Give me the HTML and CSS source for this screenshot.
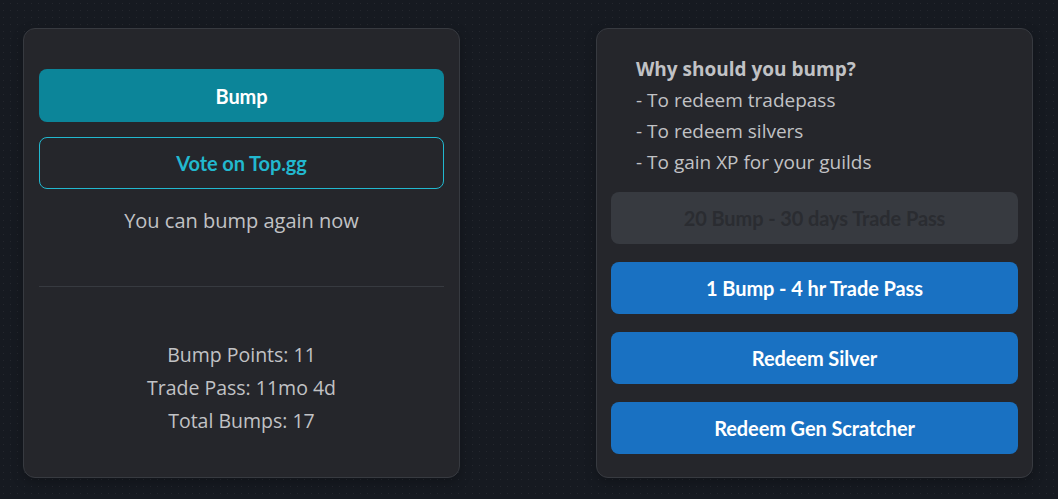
FILE: index.html
```html
<!DOCTYPE html>
<html lang="en">
<head>
<meta charset="utf-8">
<title>Bump</title>
<link rel="stylesheet" href="styles.css">
</head>
<body>
<main class="page">
  <section class="card card-left">
    <button class="btn btn-teal">Bump</button>
    <button class="btn btn-outline">Vote on Top.gg</button>
    <p class="status">You can bump again now</p>
    <hr class="divider">
    <div class="stats">
      <div>Bump Points: 11</div>
      <div>Trade Pass: 11mo 4d</div>
      <div>Total Bumps: 17</div>
    </div>
  </section>
  <section class="card card-right">
    <div class="why">
      <div class="why-title">Why should you bump?</div>
      <div>- To redeem tradepass</div>
      <div>- To redeem silvers</div>
      <div>- To gain XP for your guilds</div>
    </div>
    <div class="actions">
      <button class="btn btn-disabled" disabled>20 Bump - 30 days Trade Pass</button>
      <button class="btn btn-blue">1 Bump - 4 hr Trade Pass</button>
      <button class="btn btn-blue">Redeem Silver</button>
      <button class="btn btn-blue">Redeem Gen Scratcher</button>
    </div>
  </section>
</main>
</body>
</html>
```

FILE: styles.css
```css
* { box-sizing: border-box; }

html, body {
  margin: 0;
  height: 100%;
}

body {
  background-color: #161a21;
  background-image: radial-gradient(rgba(255,255,255,0.06) 0.6px, transparent 0.9px);
  background-size: 7px 7px;
  font-family: "Open Sans", "Noto Sans", sans-serif;
  color: #c1c2c5;
}

.page {
  display: flex;
  justify-content: space-between;
  padding: 28px 25px 0 23px;
}

.card {
  background: #25262b;
  border: 1px solid #373a40;
  border-radius: 12px;
  height: 450px;
  box-shadow: 0 4px 12px rgba(0,0,0,0.25);
  display: flex;
  flex-direction: column;
}

.card-left {
  width: 437px;
  padding: 40px 15px 0 15px;
}

.card-right {
  width: 437px;
  padding: 25px 14px 0 14px;
}

.btn {
  display: flex;
  align-items: center;
  justify-content: center;
  width: 100%;
  height: 52px;
  border-radius: 8px;
  border: 1px solid transparent;
  font-family: "Lato", "Inter", sans-serif;
  font-weight: 700;
  font-size: 20px;
  letter-spacing: -0.1px;
  cursor: pointer;
}

.btn-teal {
  background: #0c8599;
  color: #ffffff;
  height: 53px;
}

.btn-outline {
  background: transparent;
  border-color: #22b8cf;
  color: #22b8cf;
  margin-top: 15px;
}

.status {
  margin: 16px 0 0;
  text-align: center;
  font-size: 20px;
  line-height: 32px;
}

.divider {
  border: none;
  border-top: 1px solid #373a40;
  margin: 49px 0 0;
  width: 100%;
}

.stats {
  margin-top: 51px;
  text-align: center;
  font-size: 19.5px;
  line-height: 33px;
}

.why {
  padding-left: 25px;
  font-size: 19px;
  line-height: 31px;
}

.why-title {
  font-weight: 700;
}

.actions {
  display: flex;
  flex-direction: column;
  gap: 18px;
  margin-top: 14px;
}

.btn-disabled {
  background: #373a40;
  color: #2a2c31;
  cursor: not-allowed;
}

.btn-blue {
  background: #1971c2;
  color: #ffffff;
}
```
